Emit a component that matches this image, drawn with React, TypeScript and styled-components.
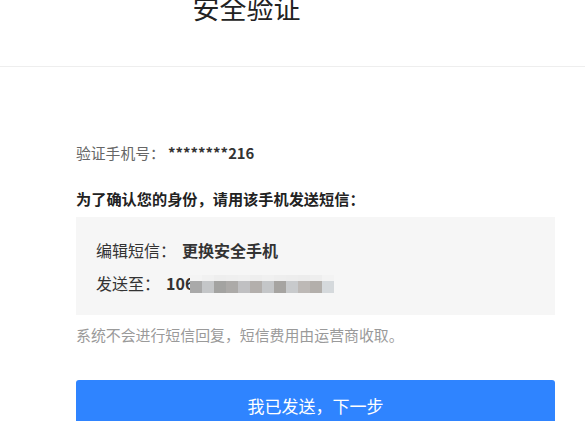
import React from 'react'
import styled, { createGlobalStyle } from 'styled-components'

const GlobalStyle = createGlobalStyle`
  html, body {
    margin: 0;
    padding: 0;
    background: #fff;
    overflow: hidden;
  }
  body {
    font-family: "Noto Sans CJK SC", "Liberation Sans", sans-serif;
    color: #333;
  }
`

const Page = styled.div`
  width: 585px;
  height: 421px;
  overflow: hidden;
  background: #fff;
`

const Header = styled.header`
  height: 66px;
  border-bottom: 1px solid #eeeeee;
  display: flex;
  justify-content: center;
  align-items: flex-start;
  padding-right: 92px;
`

const Title = styled.h1`
  margin: -7px 0 0 0;
  font-size: 27px;
  line-height: 30px;
  font-weight: 400;
  color: #222;
`

const Body = styled.main`
  padding: 76px 30px 0 76px;
  display: flex;
  flex-direction: column;
  align-items: stretch;
`

const PhoneLine = styled.div`
  font-size: 14.8px;
  line-height: 20px;
  color: #666;
`

const Strong = styled.b<{ $size?: number }>`
  font-weight: 700;
  color: #333;
  font-size: ${p => p.$size ?? 14.8}px;
`

const Instruction = styled.p`
  margin: 25px 0 0 0;
  font-size: 15.2px;
  line-height: 20px;
  font-weight: 700;
  color: #222;
`

const SmsBox = styled.div`
  margin-top: 9px;
  height: 98px;
  box-sizing: border-box;
  background: #f6f6f6;
  padding: 22px 20px 0;
  display: flex;
  flex-direction: column;
  gap: 11px;
`

const SmsRow = styled.div`
  display: flex;
  align-items: center;
  font-size: 16px;
  line-height: 22px;
  color: #333;
`

const Label = styled.span`
  margin-right: 6px;
`

const Mosaic = styled.div`
  display: grid;
  grid-template-columns: repeat(12, 12px);
  grid-template-rows: 6px 12px;
  margin-left: -4px;
  margin-top: 2px;
`

const Tile = styled.span<{ $c: string }>`
  background: ${p => p.$c};
`

const Note = styled.p`
  margin: 10px 0 0 0;
  font-size: 14.9px;
  line-height: 20px;
  color: #9a9a9a;
`

const NextButton = styled.button`
  margin-top: 35px;
  height: 50px;
  border: none;
  border-radius: 3px;
  background: #2f84ff;
  color: #fff;
  font-family: inherit;
  font-size: 17px;
  cursor: pointer;
`

const topRow = ['#f4f4f4', '#f1f1f1', '#eeeeee', '#efefef', '#f0f0f0', '#eeeeee', '#f0f0f0', '#eeeeee', '#ededed', '#ececec', '#eeeeee', '#f3f3f3']
const bottomRow = ['#a9a9a9', '#c4c6c8', '#a3a3a1', '#acaaa8', '#c0c0c2', '#b3afac', '#c4c6c8', '#a6a4a1', '#c8cacc', '#bdb9b6', '#b3afab', '#d5d9dc']

export default function App() {
  return (
    <Page>
      <GlobalStyle />
      <Header>
        <Title>安全验证</Title>
      </Header>
      <Body>
        <PhoneLine>
          验证手机号： <Strong>********216</Strong>
        </PhoneLine>
        <Instruction>为了确认您的身份，请用该手机发送短信：</Instruction>
        <SmsBox>
          <SmsRow>
            <Label>编辑短信：</Label>
            <Strong $size={16}>更换安全手机</Strong>
          </SmsRow>
          <SmsRow>
            <Label>发送至：</Label>
            <Strong $size={16}>106</Strong>
            <Mosaic>
              {[...topRow, ...bottomRow].map((c, i) => (
                <Tile key={i} $c={c} />
              ))}
            </Mosaic>
          </SmsRow>
        </SmsBox>
        <Note>系统不会进行短信回复，短信费用由运营商收取。</Note>
        <NextButton>我已发送，下一步</NextButton>
      </Body>
    </Page>
  )
}
